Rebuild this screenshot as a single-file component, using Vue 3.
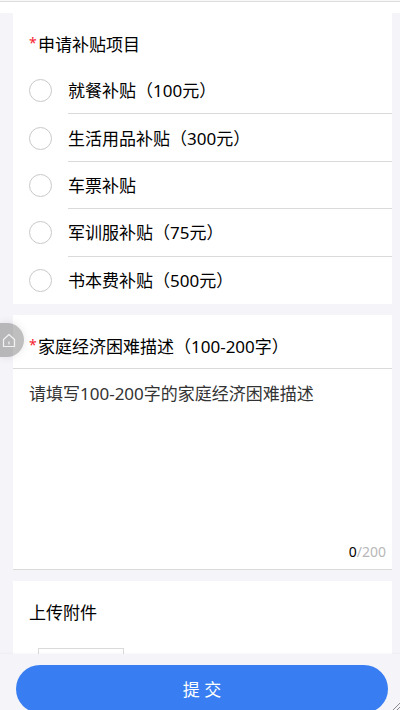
<template>
    <div class="page">
        <header class="top-bar"></header>

        <form id="applyForm" class="content" @submit.prevent>
            <fieldset class="card">
                <legend class="card-title"><i class="required">*</i>申请补贴项目</legend>
                <div class="option-list">
                    <label v-for="item in options" :key="item.id" class="option">
                        <input v-model="selected" type="radio" name="subsidy" :value="item.id">
                        <span class="option-text">{{ item.name }}</span>
                    </label>
                </div>
            </fieldset>

            <section class="card card-line">
                <label class="card-title title-line" for="desc"><i class="required">*</i>家庭经济困难描述（100-200字）</label>
                <textarea id="desc" v-model="desc" class="desc" maxlength="200"
                    placeholder="请填写100-200字的家庭经济困难描述"></textarea>
                <div class="counter"><span class="count">{{ desc.length }}</span>/200</div>
            </section>

            <section class="card upload-card">
                <label class="card-title" for="file">上传附件</label>
                <div class="upload">
                    <input id="file" type="file" class="file-input">
                </div>
            </section>
        </form>

        <footer class="footer">
            <button type="submit" form="applyForm" class="submit">提 交</button>
        </footer>

        <a href="#" class="home">
            <svg width="14" height="15" viewBox="0 0 14 15" fill="none" stroke="#f2f2f2">
                <path d="M1.5 6.5L7 1.5l5.5 5v7h-11z" stroke-width="1.2" stroke-linejoin="round" />
                <path d="M7 8.5v3" stroke-width="1.2" />
            </svg>
        </a>

        <svg class="grip" width="7" height="7" viewBox="0 0 7 7" stroke="#8c8c8c">
            <path d="M0 7L7 0M4 7l3-3" />
        </svg>
    </div>
</template>

<script setup>
import { ref } from 'vue';

const options = [
    { id: 1, name: '就餐补贴（100元）' },
    { id: 2, name: '生活用品补贴（300元）' },
    { id: 3, name: '车票补贴' },
    { id: 4, name: '军训服补贴（75元）' },
    { id: 5, name: '书本费补贴（500元）' }
];
const selected = ref(null);
const desc = ref('');
</script>

<style>
body {
    background: #f4f4f9;
}
</style>

<style scoped>
.page {
    position: relative;
    display: flex;
    flex-direction: column;
    height: 100vh;
    overflow: hidden;
    background: #f4f4f9;
    color: #000;
    font-family: "Noto Sans", "Noto Sans CJK SC", sans-serif;
    font-size: 17px;
    line-height: 26px;
}

.page * {
    box-sizing: border-box;
}

.top-bar {
    flex: none;
    height: 13px;
    background: linear-gradient(#f8f8f8 1px, #dcdcdc 1px, #dcdcdc 2px, #fff 2px);
}

.content {
    flex: 1;
    min-height: 0;
    overflow: hidden;
    display: flex;
    flex-direction: column;
    gap: 11px;
    padding: 0 8px 0 13px;
}

.card {
    flex: none;
    min-width: 0;
    margin: 0;
    padding: 0;
    border: 0;
    background: #fff;
}

.card-line {
    border-bottom: 1px solid #dadada;
}

.card-title {
    display: flex;
    width: 100%;
    height: 54px;
    padding: 19px 16px 0;
}

legend.card-title {
    float: left;
}

.title-line {
    border-bottom: 1px solid #dadada;
}

.required {
    width: 9px;
    color: #f5222d;
    font-size: 14px;
    font-style: normal;
    line-height: 22px;
}

.option-list {
    clear: both;
    display: flex;
    flex-direction: column;
    height: 237px;
}

.option {
    flex: 1;
    display: flex;
    align-items: center;
    gap: 16px;
    padding-left: 16px;
}

.option input {
    appearance: none;
    width: 23px;
    height: 23px;
    margin: 0;
    border: 1px solid #c9c9c9;
    border-radius: 50%;
}

.option input:checked {
    border: 7px solid #387ef2;
}

.option-text {
    flex: 1;
    display: flex;
    align-items: center;
    align-self: stretch;
    padding-top: 2px;
    border-bottom: 1px solid #dadada;
}

.option:last-child .option-text {
    border-bottom: 0;
}

.desc {
    display: block;
    width: 100%;
    height: 170px;
    padding: 12px 16px;
    border: 0;
    outline: 0;
    resize: none;
    background: transparent;
    color: #000;
    font: inherit;
}

.desc::placeholder {
    color: #333;
    opacity: 1;
}

.counter {
    height: 30px;
    padding-right: 6px;
    color: #b8b8b8;
    font-size: 14px;
    text-align: right;
}

.count {
    color: #000;
}

.upload {
    width: 86px;
    height: 86px;
    margin: 13px 0 16px 25px;
    border: 1px solid #dadada;
}

.file-input {
    width: 100%;
    height: 100%;
    opacity: 0;
}

.footer {
    flex: none;
    height: 56px;
    padding: 11px 12px 0 16px;
    background: #f4f4f9;
    box-shadow: 0 0 3px rgba(0, 0, 0, 0.06);
}

.submit {
    display: block;
    width: 100%;
    height: 48px;
    padding: 2px 0 0;
    border: 0;
    border-radius: 24px;
    background: #387ef2;
    color: #fff;
    font: inherit;
}

.home {
    position: absolute;
    top: 323px;
    left: 0;
    display: flex;
    align-items: center;
    width: 24px;
    height: 34px;
    padding-left: 2px;
    border-radius: 0 17px 17px 0;
    background: rgba(0, 0, 0, 0.25);
    box-shadow: 0 0 8px rgba(0, 0, 0, 0.1);
}

.grip {
    position: absolute;
    right: 0;
    bottom: 0;
}
</style>
